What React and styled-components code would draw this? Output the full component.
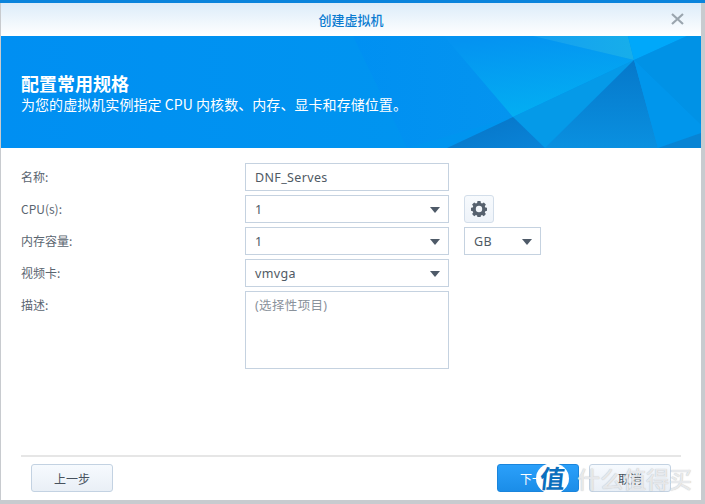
import React from "react";
import styled, { createGlobalStyle } from "styled-components";

const Global = createGlobalStyle`
  html, body { margin: 0; padding: 0; }
  body { width: 705px; height: 504px; overflow: hidden; background: #c9ccd0; font-family: "Noto Sans CJK SC", "Liberation Sans", sans-serif; }
  * { box-sizing: border-box; }
`;
const Desktop = styled.div`
  width: 705px; height: 504px; position: relative; overflow: hidden;
  background: linear-gradient(#0a84dc 0 3px, #c8cbcf 3px);
  padding: 3px 4px 4px 1px;
`;
const Win = styled.div`
  width: 700px; height: 497px; background: #fff; display: flex; flex-direction: column;
`;
const TitleBar = styled.div`
  height: 33px; flex: none; position: relative; display: flex; align-items: center; justify-content: center;
  background: linear-gradient(#dcecf9, #fff);
  color: #0a7bd0; font-size: 13px; font-weight: 500;
`;
const Close = styled.svg`
  position: absolute; right: 17px; top: 10px; width: 13px; height: 12px;
`;
const Banner = styled.div`
  height: 112px; flex: none; position: relative; overflow: hidden; background: #0090f2; color: #fff;
  display: flex; flex-direction: column; padding: 35px 0 0 20px;
`;
const Art = styled.svg`
  position: absolute; left: 0; top: 0; width: 700px; height: 112px;
`;
const Heading = styled.div`
  position: relative; font-size: 18px; font-weight: 700; line-height: 25px;
`;
const Sub = styled.div`
  position: relative; font-size: 14px; line-height: 18px; margin-top: -1px; white-space: pre; letter-spacing: .06px;
`;
const Form = styled.div`
  flex: none; height: 307px; padding: 15px 0 0 20px; display: flex; flex-direction: column; gap: 4px;
`;
const Row = styled.div`
  display: flex; align-items: flex-start; gap: 15px;
`;
const Label = styled.div`
  width: 209px; flex: none; height: 28px; line-height: 27px; font-size: 12px; color: #5a6570;
`;
const Input = styled.div`
  width: ${p => p.$w || 204}px; height: ${p => p.$h || 28}px; border: 1px solid #c5d2e0; padding: 0 9px;
  font-size: 12.5px; line-height: 27px; color: ${p => p.$muted ? "#8a929b" : "#505a64"};
  font-family: "Noto Sans", "Noto Sans CJK SC", sans-serif; letter-spacing: .35px;
  position: relative; flex: none;
`;
const Arrow = styled.span`
  position: absolute; right: 8px; top: 11px; width: 0; height: 0;
  border-left: 5.5px solid transparent; border-right: 5.5px solid transparent; border-top: 6px solid #4e5a68;
`;
const GearBtn = styled.div`
  width: 30px; height: 28px; border: 1px solid #d3deea; border-radius: 3px; flex: none;
  background: linear-gradient(#f7fafd, #eef3f9); display: flex; align-items: center; justify-content: center;
`;
const Footer = styled.div`
  flex: 1; display: flex; flex-direction: column;
`;
const Rule = styled.div`
  height: 2px; background: #e6e6e6; margin: 0 20px;
`;
const Buttons = styled.div`
  display: flex; padding: 7px 0 0 30px; gap: 10px;
`;
const Btn = styled.div`
  width: 82px; height: 28px; border-radius: 3px; font-size: 12px; line-height: 27px; text-align: center;
  color: ${p => p.$primary ? "#fff" : "#47525e"};
  border: 1px solid ${p => p.$primary ? "#1a85dc" : "#c3d2e2"};
  background: ${p => p.$primary ? "linear-gradient(#2ba0fa,#1b8de8)" : "linear-gradient(#f6fafe,#e9eff6)"};
  margin-left: ${p => p.$ml || 0}px;
`;
const WmCircle = styled.div`
  position: absolute; left: 536px; top: 463px; width: 33px; height: 31px; border-radius: 50%;
  background: #fff; color: #0c6fbe; font-size: 25px; font-weight: 700; line-height: 29px; text-align: center;
`;
const WmGlyph = styled.span`
  display: inline-block; transform: skewX(-6deg);
`;
const WmText = styled.div`
  position: absolute; left: 577px; top: 463px; font-size: 23px; line-height: 30px;
  color: rgba(240,242,245,.85); font-weight: 500; white-space: nowrap; text-shadow: 0 0 1px rgba(120,120,120,.55);
`;

export default function App() {
  return (
    <Desktop>
      <Global />
      <Win>
        <TitleBar>
          创建虚拟机
          <Close viewBox="0 0 13 12"><path d="M1 1 12 11M12 1 1 11" stroke="#9aa5ae" strokeWidth="2.2" /></Close>
        </TitleBar>
        <Banner>
          <Art viewBox="0 0 700 112">
            <defs>
              <linearGradient id="bg" x1="0" x2="1" y1="0" y2="0">
                <stop offset="0" stopColor="#008ff2" />
                <stop offset="1" stopColor="#0098ee" />
              </linearGradient>
              <linearGradient id="ridge" x1="0.3" y1="0" x2="0.6" y2="1">
                <stop offset="0" stopColor="#0493f1" />
                <stop offset="1" stopColor="#03b0f2" />
              </linearGradient>
              <linearGradient id="band" x1="0" x2="1" y1="0" y2="0">
                <stop offset="0" stopColor="#0090f2" />
                <stop offset="1" stopColor="#0494ef" />
              </linearGradient>
              <linearGradient id="dark" x1="0.6" y1="0" x2="0.6" y2="1">
                <stop offset="0" stopColor="#0678ca" />
                <stop offset="1" stopColor="#0a90e0" />
              </linearGradient>
              <linearGradient id="corner" x1="0" x2="1" y1="0" y2="1">
                <stop offset="0" stopColor="#0674c6" />
                <stop offset="1" stopColor="#0a84d8" />
              </linearGradient>
              <linearGradient id="light" x1="0" x2="1" y1="0" y2="0">
                <stop offset="0" stopColor="#159ff0" />
                <stop offset="1" stopColor="#17aeea" />
              </linearGradient>
            </defs>
            <rect width="700" height="112" fill="url(#bg)" />
            <polygon points="352,0 443,0 512,81 406,112" fill="url(#band)" />
            <polygon points="443,0 532,0 633,24 512,81" fill="url(#ridge)" />
            <polygon points="532,0 627,0 633,24" fill="url(#light)" />
            <polygon points="627,0 686,0 633,24" fill="#00a8fa" />
            <polygon points="686,0 700,0 700,89 633,24" fill="#0092e6" />
            <polygon points="633,24 512,81 544,112" fill="#059ae8" />
            <polygon points="633,24 544,112 657,112" fill="url(#dark)" />
            <polygon points="633,24 657,112 700,97 700,89" fill="#0096ec" />
            <polygon points="657,112 700,97 700,112" fill="#0884d4" />
            <polygon points="446,112 512,81 544,112" fill="url(#corner)" />
          </Art>
          <Heading>配置常用规格</Heading>
          <Sub>为您的虚拟机实例指定 CPU 内核数、内存、显卡和存储位置。</Sub>
        </Banner>
        <Form>
          <Row><Label>名称:</Label><Input>DNF_Serves</Input></Row>
          <Row>
            <Label>CPU(s):</Label>
            <Input>1<Arrow /></Input>
            <GearBtn>
              <svg width="16" height="16" viewBox="0 0 16 16">
                <path fill="#56616e" fillRule="evenodd" d="M6.5 0h3l.4 2 1.2.5 1.7-1.1 2.1 2.1-1.1 1.7.5 1.2 2 .4v3l-2 .4-.5 1.2 1.1 1.7-2.1 2.1-1.7-1.1-1.2.5-.4 2h-3l-.4-2-1.2-.5-1.7 1.1-2.1-2.1 1.1-1.7-.5-1.2-2-.4v-3l2-.4.5-1.2L1.1 3.5l2.1-2.1 1.7 1.1 1.2-.5zM8 4.8a3.2 3.2 0 1 0 0 6.4 3.2 3.2 0 0 0 0-6.4z" />
              </svg>
            </GearBtn>
          </Row>
          <Row>
            <Label>内存容量:</Label>
            <Input>1<Arrow /></Input>
            <Input $w={77}>GB<Arrow /></Input>
          </Row>
          <Row><Label>视频卡:</Label><Input>vmvga<Arrow /></Input></Row>
          <Row><Label>描述:</Label><Input $h={78} $muted>(选择性项目)</Input></Row>
        </Form>
        <Footer>
          <Rule />
          <Buttons>
            <Btn>上一步</Btn>
            <Btn $primary $ml={374}>下一步</Btn>
            <Btn>取消</Btn>
          </Buttons>
        </Footer>
      </Win>
      <WmCircle><WmGlyph>值</WmGlyph></WmCircle>
      <WmText>什么值得买</WmText>
    </Desktop>
  );
}
